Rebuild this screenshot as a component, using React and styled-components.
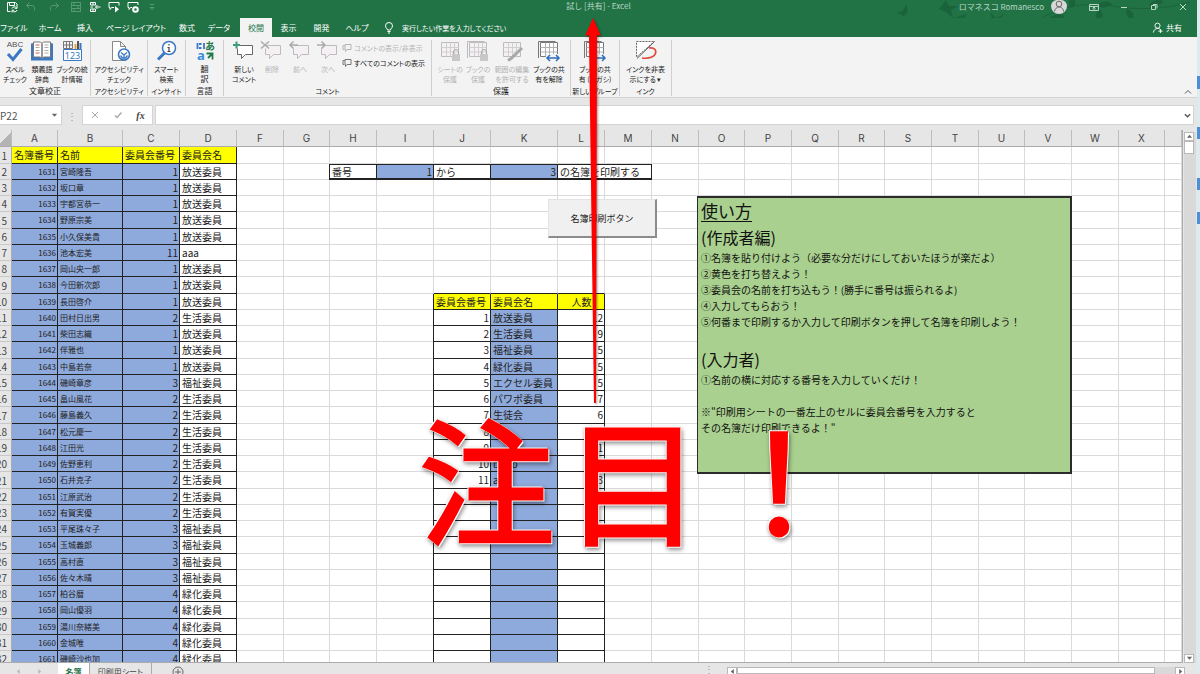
import React, { useState } from "react";
import styled, { createGlobalStyle, css } from "styled-components";

const GlobalStyle = createGlobalStyle`
  * {
    box-sizing: border-box;
  }
  html, body, #root {
    height: 100%;
    margin: 0;
  }
  body {
    overflow: hidden;
    background: #dcebf0;
    color: #222;
    font-family: "Noto Sans CJK JP", "Noto Sans", sans-serif;
    font-size: 8px;
  }
  button, input {
    margin: 0;
    padding: 0;
    border: 0;
    background: none;
    color: inherit;
    font: inherit;
  }
`;

const GREEN = "#217346";
const BLUE = "#8ea9db";
const YELLOW = "#ffff00";

/* ---------- data ---------- */

const committees = {
  1: "放送委員",
  2: "生活委員",
  3: "福祉委員",
  4: "緑化委員",
  11: "aaa"
};

const members = [
  ["宮崎隆吾", 1],
  ["坂口章", 1],
  ["宇都宮恭一", 1],
  ["野原宗美", 1],
  ["小久保美貴", 1],
  ["池本宏美", 11],
  ["岡山央一郎", 1],
  ["今田新次郎", 1],
  ["長田啓介", 1],
  ["田村日出男", 2],
  ["柴田志織", 1],
  ["伴雅也", 1],
  ["中島若奈", 1],
  ["磯崎章彦", 3],
  ["畠山風花", 2],
  ["藤島義久", 2],
  ["松元慶一", 2],
  ["江田光", 2],
  ["佐野恵利", 2],
  ["石井克子", 2],
  ["江原武治", 2],
  ["有賀実優", 2],
  ["平尾珠々子", 3],
  ["玉城義郎", 3],
  ["高村直", 3],
  ["佐々木晴", 3],
  ["柏谷暦", 4],
  ["岡山優羽", 4],
  ["湯川奈緒美", 4],
  ["金城唯", 4],
  ["磯崎沙也加", 4]
];

const summary = [
  [1, "放送委員", 12],
  [2, "生活委員", 9],
  [3, "福祉委員", 5],
  [4, "緑化委員", 5],
  [5, "エクセル委員", 5],
  [6, "パワポ委員", 7],
  [7, "生徒会", 6],
  [8, "", ""],
  [9, "", 1],
  [10, "bbbb", 1],
  [11, "aaa", 3]
];

const columns = [
  ["A", 46],
  ["B", 65],
  ["C", 57],
  ["D", 57],
  ["F", 47],
  ["G", 46],
  ["H", 47],
  ["I", 57],
  ["J", 57],
  ["K", 67],
  ["L", 47],
  ["M", 47],
  ["N", 47],
  ["O", 46],
  ["P", 47],
  ["Q", 47],
  ["R", 46],
  ["S", 47],
  ["T", 47],
  ["U", 46],
  ["V", 47],
  ["W", 47],
  ["X", 46]
];

const rows = Array.from({ length: 32 }, (_, i) => i + 1);

const cellFor = (col, row) => {
  if (row === 1) {
    const head = { A: "名簿番号", B: "名前", C: "委員会番号", D: "委員会名" };
    return head[col] ? { text: head[col], fill: YELLOW, ink: true } : {};
  }
  if ("ABCD".includes(col)) {
    const [name, no] = members[row - 2];
    if (col === "A") {
      return { text: 1629 + row, fill: BLUE, ink: true, right: true, small: true };
    }
    if (col === "B") return { text: name, fill: BLUE, ink: true, small: true };
    if (col === "C") return { text: no, fill: BLUE, ink: true, right: true };
    return { text: committees[no], ink: true };
  }
  if (row === 2) {
    const box = {
      H: { text: "番号" },
      I: { text: 1, fill: BLUE, right: true },
      J: { text: "から" },
      K: { text: 3, fill: BLUE, right: true },
      L: { text: "の名簿を印刷する", span: 2 }
    };
    return box[col]
      ? { ...box[col], ink: true, boxed: true, first: col === "H" }
      : {};
  }
  if (row === 9 && "JKL".includes(col)) return { inkBottom: true };
  if (row === 10 && "JKL".includes(col)) {
    const head = { J: "委員会番号", K: "委員会名", L: "人数" };
    return {
      text: head[col],
      fill: YELLOW,
      ink: true,
      center: col === "L",
      first: col === "J"
    };
  }
  if (row > 10 && "JKL".includes(col)) {
    const item = summary[row - 11] || ["", "", ""];
    return {
      text: item["JKL".indexOf(col)],
      fill: col === "K" ? BLUE : undefined,
      right: col !== "K",
      ink: true,
      first: col === "J"
    };
  }
  return {};
};

/* ---------- window frame ---------- */

const Screen = styled.div`
  display: flex;
  height: 100vh;
`;

const Window = styled.div`
  position: relative;
  flex: 1;
  min-width: 0;
  display: flex;
  flex-direction: column;
  overflow: hidden;
  background: #e6e6e6;
`;

const Desktop = styled.aside`
  width: 3px;
  padding-top: 76px;
  display: flex;
  flex-direction: column;
  background: #dcebf0;
`;

const DesktopMark = styled.i`
  height: ${p => p.$height}px;
  margin-bottom: ${p => p.$after}px;
  background: #4a90d9;
`;

const TitleBar = styled.header`
  position: relative;
  height: 18px;
  display: grid;
  grid-template-columns: 1fr auto 1fr;
  align-items: start;
  background: ${GREEN};
  color: #b9d5c5;
  line-height: 12px;
`;

const Leaves = styled.svg`
  position: absolute;
  top: 0;
  right: 0;
  width: 310px;
  height: 37px;
  fill: #1b633b;
  stroke: #1b633b;
  pointer-events: none;
`;

const QuickAccess = styled.div`
  display: flex;
  gap: 7px;
  padding: 1px 0 0 6px;
`;

const QuickButton = styled.button`
  width: 12px;
  height: 12px;
  margin-left: ${p => p.$space || 0}px;
  color: #fff;
  &:disabled {
    color: #579876;
  }
  svg {
    display: block;
  }
`;

const WindowTitle = styled.h1`
  margin: 0;
  font-size: 8px;
  font-weight: 400;
`;

const Account = styled.div`
  position: relative;
  display: flex;
  justify-content: flex-end;
  align-items: center;
  padding-right: 9px;
`;

const Avatar = styled.span`
  width: 16px;
  height: 14px;
  margin: 0 22px 0 7px;
  border-radius: 6px 6px 8px 8px;
  background: #d8d8d8;
  color: #666;
  svg {
    display: block;
    margin: 0 auto;
  }
`;

const WindowButton = styled.button`
  width: 10px;
  height: 12px;
  margin-left: ${p => p.$space || 0}px;
  svg {
    display: block;
  }
`;

const TabBar = styled.nav`
  position: relative;
  height: 19px;
  display: flex;
  align-items: stretch;
  background: ${GREEN};
  color: #fff;
`;

const Tab = styled.button`
  width: ${p => p.$width}px;
  white-space: nowrap;
  font-feature-settings: "palt";
  ${p =>
    p.$active &&
    css`
      background: #f3f3f3;
      color: ${GREEN};
    `}
`;

const TellMe = styled.label`
  flex: 1;
  display: flex;
  align-items: center;
  gap: 8px;
  padding-left: 8px;
  input {
    flex: 1;
    font-size: 7px;
    font-feature-settings: "palt";
  }
  input::placeholder {
    color: #fff;
    opacity: 1;
  }
`;

const ShareButton = styled.button`
  position: relative;
  display: flex;
  align-items: center;
  gap: 3px;
  margin-right: 15px;
`;

/* ---------- ribbon ---------- */

const Ribbon = styled.section`
  height: 61px;
  display: flex;
  padding: 3px 0 1px;
  border-bottom: 1px solid #d2d2d2;
  background: #f3f3f3;
`;

const Group = styled.div`
  width: ${p => p.$width}px;
  display: flex;
  flex-direction: column;
  justify-content: space-between;
  border-right: 1px solid #cfcfcf;
`;

const GroupTools = styled.div`
  display: flex;
  justify-content: center;
`;

const GroupName = styled.div`
  text-align: center;
  line-height: 10px;
  white-space: nowrap;
  font-size: ${p => (p.$tight ? 7 : 8)}px;
  font-feature-settings: "palt";
`;

const Tool = styled.button`
  width: ${p => p.$width || 28}px;
  display: flex;
  flex-direction: column;
  align-items: center;
  line-height: 10px;
  white-space: nowrap;
  font-size: ${p => (p.$tight ? 7 : 8)}px;
  font-feature-settings: "palt";
  svg {
    display: block;
    width: 24px;
    height: 22px;
    margin-bottom: 2px;
  }
  &:disabled {
    color: #b4b4b4;
  }
`;

const SideTools = styled.div`
  display: flex;
  flex-direction: column;
  align-items: flex-start;
`;

const SideTool = styled.button`
  display: flex;
  align-items: center;
  gap: 2px;
  height: 15px;
  font-size: 7px;
  white-space: nowrap;
  font-feature-settings: "palt";
  &:disabled {
    color: #b4b4b4;
  }
`;

const CollapseButton = styled.button`
  align-self: flex-end;
  margin: 0 5px 0 auto;
  width: 8px;
  height: 8px;
  svg {
    display: block;
  }
`;

/* ---------- formula bar ---------- */

const FormulaBar = styled.div`
  height: 32px;
  display: flex;
  align-items: stretch;
  padding: 7px 3px 5px 0;
  color: #555;
`;

const NameBox = styled.label`
  width: 62px;
  display: flex;
  align-items: center;
  padding-right: 3px;
  background: #fff;
  border: 1px solid #d4d4d4;
  border-left: 0;
  input {
    width: 51px;
    font-size: 10px;
  }
  svg {
    flex: none;
  }
`;

const Grip = styled.span`
  width: 20px;
  align-self: center;
  text-align: center;
  font-size: 10px;
  color: #999;
`;

const FormulaButtons = styled.div`
  width: 71px;
  display: flex;
  justify-content: space-around;
  align-items: center;
  background: #fff;
  border: 1px solid #d4d4d4;
`;

const FormulaButton = styled.button`
  width: 16px;
  color: #aaa;
  svg {
    display: block;
    margin: auto;
  }
`;

const FxLabel = styled.i`
  color: #444;
  font: italic bold 10px "Liberation Serif", serif;
`;

const FormulaInput = styled.label`
  flex: 1;
  margin-left: 2px;
  display: flex;
  align-items: center;
  padding: 0 2px;
  background: #fff;
  border: 1px solid #d4d4d4;
  input {
    flex: 1;
    font-size: 10px;
  }
`;

/* ---------- sheet ---------- */

const Workspace = styled.main`
  flex: 1;
  min-height: 0;
  display: flex;
`;

const Sheet = styled.div`
  position: relative;
  flex: 1;
  min-width: 0;
  overflow: hidden;
  border-right: 1px solid #ababab;
  border-bottom: 1px solid #ababab;
`;

const Grid = styled.table`
  width: 100%;
  table-layout: fixed;
  border-collapse: separate;
  border-spacing: 0;
  background: #fff;
  thead tr {
    height: 17px;
  }
  tbody tr {
    height: 16px;
  }
  tbody tr:nth-child(4n + 1) {
    height: 17px;
  }
`;

const ColumnHead = styled.th`
  padding: 0;
  border-right: 1px solid #bdbdbd;
  border-bottom: 1px solid #ababab;
  background: #e6e6e6;
  color: #444;
  font: 400 10px/16px Inter, sans-serif;
`;

const RowHead = styled.th`
  padding: 0;
  overflow: hidden;
  border-right: 1px solid #ababab;
  border-bottom: 1px solid #c8c8c8;
  background: #e6e6e6;
  color: #444;
  font-size: 10px;
  font-weight: 400;
  line-height: 15px;
  span {
    display: flex;
    justify-content: flex-end;
    padding-right: 4px;
  }
`;

const Corner = styled.th`
  padding: 0;
  border-right: 1px solid #bdbdbd;
  border-bottom: 1px solid #ababab;
  background: linear-gradient(135deg, #e6e6e6 50%, #b4b4b4 50%);
`;

const Cell = styled.td`
  padding: 0 1px 0 2px;
  overflow: hidden;
  white-space: nowrap;
  border-right: 1px solid #dadada;
  border-bottom: 1px solid #dadada;
  background: ${p => p.$fill || "#fff"};
  font-size: ${p => (p.$small ? 8 : 10)}px;
  line-height: 14px;
  text-align: ${p => (p.$center ? "center" : p.$right ? "right" : "left")};
  ${p =>
    p.$ink &&
    css`
      border-right-color: #222;
      border-bottom-color: #222;
    `}
  ${p =>
    p.$inkBottom &&
    css`
      border-bottom-color: #222;
    `}
  ${p =>
    p.$first &&
    css`
      box-shadow: -1px 0 #222;
    `}
  ${p =>
    p.$boxed &&
    css`
      border-top: 1px solid #222;
      border-bottom-width: 2px;
      line-height: 13px;
    `}
`;

const PrintButton = styled.button`
  position: absolute;
  left: 548px;
  top: 69px;
  width: 109px;
  height: 39px;
  background: #f0f0f0;
  border: 1px solid #e3e3e3;
  border-right: 2px solid #8c8c8c;
  border-bottom: 2px solid #8c8c8c;
  font-size: 9px;
`;

const Note = styled.article`
  position: absolute;
  left: 697px;
  top: 66px;
  width: 375px;
  height: 278px;
  padding: 0 3px;
  border: 2px solid #2b2b2b;
  border-left-width: 1px;
  background: #a9d08e;
  color: #111;
  font-size: 10px;
  line-height: 16px;
  white-space: nowrap;
  h2, h3 {
    margin: 0;
    font-weight: 400;
    line-height: 26px;
  }
  h2 {
    font-size: 17px;
    text-decoration: underline;
    text-decoration-thickness: 1px;
    text-underline-offset: 3px;
  }
  h3 {
    font-size: 16px;
  }
  p {
    margin: 0 0 16px;
  }
`;

const VerticalScroll = styled.div`
  width: 12px;
  margin: 2px 1px 0 1px;
  display: flex;
  flex-direction: column;
  background: #d9d9d9;
`;

const ScrollButton = styled.button`
  width: 10px;
  height: 9px;
  flex: none;
  background: #fff;
  border: 1px solid #b9b9b9;
  svg {
    display: block;
    margin: auto;
  }
`;

const VerticalThumb = styled.div`
  width: 10px;
  height: 13px;
  background: #fff;
  border: 1px solid #b9b9b9;
`;

const ScrollSpace = styled.div`
  flex: 1;
`;

/* ---------- bottom bar ---------- */

const BottomBar = styled.footer`
  height: 11px;
  display: flex;
  overflow: hidden;
  color: #444;
`;

const SheetNav = styled.div`
  width: 58px;
  display: flex;
  justify-content: center;
  gap: 14px;
  padding-top: 5px;
  svg {
    display: block;
  }
`;

const SheetTab = styled.button`
  height: 16px;
  width: ${p => p.$width}px;
  white-space: nowrap;
  font-feature-settings: "palt";
  border-right: 1px solid #ababab;
  ${p =>
    p.$active &&
    css`
      background: #fff;
      color: ${GREEN};
      font-weight: 700;
    `}
`;

const AddSheet = styled.button`
  width: 12px;
  height: 12px;
  margin: 3px 0 0 20px;
  svg {
    display: block;
  }
`;

const HorizontalScroll = styled.div`
  width: 458px;
  margin: 4px 12px 0 8px;
  display: flex;
  background: #d9d9d9;
`;

const HorizontalThumb = styled.div`
  width: 418px;
  background: #fff;
  border: 1px solid #b9b9b9;
`;

/* ---------- callout over the sheet ---------- */

const Arrow = styled.svg`
  position: absolute;
  left: 581px;
  top: 16px;
  width: 24px;
  height: 390px;
  pointer-events: none;
  filter: drop-shadow(1px 1px 1px rgba(0, 0, 0, 0.4));
`;

const Attention = styled.strong`
  position: absolute;
  left: 419px;
  top: 406px;
  display: flex;
  gap: 10px;
  color: #f00;
  font-size: 136px;
  font-weight: 400;
  line-height: 140px;
  -webkit-text-stroke: 3px #f00;
  filter: drop-shadow(1px 1px 0 #fff) drop-shadow(-1px -1px 0 #fff)
    drop-shadow(1px 2px 2px rgba(0, 0, 0, 0.45));
  pointer-events: none;
`;

/* ---------- icons ---------- */

const Person = ({ size = 12, plus }) => (
  <svg width={size} height={size} viewBox="0 0 12 12" fill="none" stroke="currentColor">
    <circle cx="6" cy="4" r="2.8" />
    <path d="M1.5 11.5C2 8.5 4 7 6 7s3 .8 4 2.4" />
    {plus ? <path d="M7 10h4.5M9.2 7.8v4.2" /> : <path d="M10 9.4l.6 2.1" />}
  </svg>
);

const Triangle = ({ dir = "down", color = "#666" }) => {
  const paths = {
    down: "M1 2h6L4 5.500z",
    up: "M1 5.500h6L4 2z",
    left: "M5.500 1v6L2 4z",
    right: "M2.500 1v6L6 4z"
  };
  return (
    <svg width="7" height="7" viewBox="0 0 8 8" fill={color}>
      <path d={paths[dir]} />
    </svg>
  );
};

const QuickIcon = ({ name }) => (
  <svg width="12" height="12" viewBox="0 0 12 12" fill="none" stroke="currentColor">
    {name === "save" && (
      <>
        <path d="M4.500 10.500h-3v-9h8l1.500 1.500v2M3.500 1.500v3h5v-3M6 7.500a2.500 2.500 0 0 1 4.500-.5M11 5v2.300H8.700M11 9a2.500 2.500 0 0 1-4.500.8M6 11.500V9.300h2.200" />
      </>
    )}
    {name === "undo" && <path d="M4.500 1.500L1.500 4.500l3 3M1.500 4.500h5.500a3 3 0 0 1 2 5" />}
    {name === "redo" && <path d="M7.500 1.500l3 3-3 3M10.500 4.500H5a3 3 0 0 0-2 5" />}
    {name === "sheet" && <path d="M1.500 1.500h9v9h-9zM1.500 4.500h9M1.500 7.500h9M4 1.500v3M4 7.500v3M8 4.500v3" />}
    {name === "insert" && (
      <path d="M1.500 1.500h5v2.500h-5zM1.500 8h5v2.500h-5zM4 1.500V4M4 8v2.500M1.500 6h2.500M11.500 6H6.500M8.500 4L6.500 6l2 2" />
    )}
    {name === "play" && (
      <>
        <path d="M6 6.500H3.500L2 8.500v-2H1v-5h10v3" />
        <path d="M7 5l4 3.200L7 11.500z" fill="currentColor" stroke="none" />
      </>
    )}
    {name === "record" && (
      <>
        <path d="M5 6.500H3.500L2 8.500v-2H1v-5h10v2.500" />
        <circle cx="8.500" cy="8.500" r="2.300" strokeWidth="2" />
      </>
    )}
    {name === "more" && <path d="M3.500 3.500h5M4 6.500l2 2 2-2z" />}
  </svg>
);

const Bubble = ({ mark, live }) => (
  <svg viewBox="0 0 24 22" fill="none" stroke={live ? "#666" : "#bcbcbc"}>
    <path d="M6.500 5.500h14v9h-7L9.500 18.500v-4h-4v-6" fill={live ? "#fff" : "#f4f0f3"} />
    {mark === "plus" && <path d="M1 5h7M4.500 1.500v7" stroke="#3f9b78" strokeWidth="2" />}
    {mark === "x" && <path d="M1 1.500l8 7M9 1.500l-8 7" stroke="#aaa" strokeWidth="1.500" />}
    {mark === "left" && <path d="M10 5H2M5.500 1.500L2 5l3.500 3.500" stroke="#aaa" strokeWidth="1.500" />}
    {mark === "right" && <path d="M1 5h8M5.500 1.500L9 5 5.500 8.500" stroke="#aaa" strokeWidth="1.500" />}
  </svg>
);

const SheetIcon = ({ mark, live }) => {
  const line = live ? "#777" : "#bcbcbc";
  return (
    <svg viewBox="0 0 24 22" fill="none" stroke={line}>
      {mark !== "lock" && mark !== "pen" && <path d="M1.500 18V1.500h17" />}
      <path
        d="M3.500 2.500h17v14h-17z"
        fill={live ? "#fff" : "#f4f0f3"}
      />
      <path
        d="M3.500 7.500h17M3.500 12h17M8.500 2.500v14M12.500 2.500v14M16.500 2.500v14"
        stroke={live ? "#b0b0b0" : "#d0d0d0"}
      />
      {(mark === "lock" || mark === "booklock") && (
        <>
          <path d="M15.500 14v-2a2.500 2.500 0 0 1 5 0v2" stroke="#aaa" />
          <path d="M14 14h8v7h-8z" fill="#c8c8c8" stroke="none" />
        </>
      )}
      {mark === "pen" && <path d="M22 8L11 18.500l-3 2" stroke="#a8a8a8" strokeWidth="3" />}
      {mark === "share" && (
        <>
          <path d="M9 14h14v8H9z" fill="#f3f3f3" stroke="none" />
          <path d="M10 18h12M13 15l-3 3 3 3M19 15l3 3-3 3" stroke="#2f6ebc" strokeWidth="1.500" />
        </>
      )}
    </svg>
  );
};

const SpellIcon = () => (
  <svg viewBox="0 0 24 22" fill="none">
    <text x="12" y="7" textAnchor="middle" fontSize="8" fill="#555" fontFamily="Liberation Sans">ABC</text>
    <path d="M5 14l5 5.500L18.500 9" stroke="#3a78c3" strokeWidth="3" />
  </svg>
);

const BookIcon = () => (
  <svg viewBox="0 0 24 22" fill="#fff" stroke="#777">
    <path d="M2 3.500v16h20v-16" fill="#3a78c3" stroke="#3a78c3" strokeWidth="2" />
    <path d="M3.500 2h7l1.500 1.500v15L10.500 17h-7zM20.500 2h-7L12 3.500v15l1.500-1.500h7z" />
    <path d="M5.500 5h4M5.500 13h4" stroke="#d9583b" />
    <path d="M5.500 7.500h4M5.500 10.500h4M14.500 5h4M14.500 7.500h4M14.500 10.500h4M14.500 13h4" stroke="#aaa" />
  </svg>
);

const StatsIcon = () => (
  <svg viewBox="0 0 24 22" fill="none" stroke="#777">
    <path d="M3.500 1.500h9v7h-9zM3.500 5h9M6.500 1.500v7M9.500 1.500v7" />
    <path d="M15.500 9V4" stroke="#e2a23b" strokeWidth="2" />
    <path d="M18 9V1" stroke="#555" strokeWidth="2" />
    <path d="M20.500 9V3" stroke="#3a78c3" strokeWidth="2" />
    <path d="M3.500 9.500h18v11h-18z" fill="#fff" stroke="#3a78c3" />
    <text x="12.500" y="18.500" textAnchor="middle" fontSize="9" stroke="none" fill="#3a78c3" fontFamily="Noto Sans">123</text>
  </svg>
);

const AccessIcon = () => (
  <svg viewBox="0 0 24 22" fill="#fff" stroke="#888">
    <path d="M5.500 20.500v-19h8l5 5v14zM13.500 1.500v5h5" />
    <circle cx="17" cy="14.500" r="5.500" stroke="#3a78c3" strokeWidth="1.600" />
    <path d="M14 12.500l3 2.500 3-2.500M17 15v3M13.500 15.500l2 2.500h3l2-2.500" fill="none" stroke="#3a78c3" strokeWidth="1.300" />
  </svg>
);

const LookupIcon = () => (
  <svg viewBox="0 0 24 22" fill="none">
    <path d="M10 12.500L3 19.500" stroke="#3a78c3" strokeWidth="3" />
    <circle cx="14" cy="8" r="6.500" fill="#fff" stroke="#3a78c3" strokeWidth="1.500" />
    <path d="M14 7v4.500M14 4v1.500M12.500 11.500h3M12.500 7.500H14" stroke="#444" strokeWidth="1.200" />
  </svg>
);

const TranslateIcon = () => (
  <svg viewBox="0 0 24 22" fill="none" strokeWidth="1.800">
    <text x="12" y="10" fontSize="10" fontWeight="700" fill="#1f7a4a">あ</text>
    <text x="4" y="20" fontSize="13" fontWeight="700" fill="#3a8fdb" fontFamily="Noto Sans">a</text>
    <path d="M4.500 3v6M8.500 4H6M8.500 8H6M11 3v6" stroke="#3a78c3" />
    <path d="M13.500 13.500h6v6M19 14l-4 4" stroke="#1f7a4a" />
  </svg>
);

const InkIcon = () => (
  <svg viewBox="0 0 24 22" fill="none">
    <path d="M2.500 1.500h18L2.500 17z" fill="#fff" stroke="#666" strokeDasharray="2 1" />
    <path d="M20.500 1.500L3 18.500" stroke="#555" />
    <path d="M15 8c6-1 8 3 6 6.500-2 3-8 4-13 3.500" stroke="#e0483e" strokeWidth="1.600" />
  </svg>
);

const SmallBubble = ({ color = "currentColor" }) => (
  <svg width="10" height="10" viewBox="0 0 10 10" fill="none" stroke={color}>
    <path d="M2.500 6.500H1v-4h2M3 1.500h6v5H5L3.500 8.500v-2H3z" />
  </svg>
);

/* ---------- parts ---------- */

const tabs = [
  ["ファイル", 26],
  ["ホーム", 48],
  ["挿入", 22],
  ["ページ レイアウト", 80],
  ["数式", 22],
  ["データ", 42],
  ["校閲", 32],
  ["表示", 33],
  ["開発", 33],
  ["ヘルプ", 38]
];

const Header = () => {
  const [active, setActive] = useState("校閲");
  return (
    <>
      <TitleBar>
        <Leaves viewBox="0 0 310 37">
          <path d="M10 13l6-2 3-7 2 8-4 4zM52 9l7-9 3 6 9 0-7 4 2 8-6-5zM66 18l14-4-6 10-8-2zM103 12l6 6 8-4-6 7-2 6-4-8z" stroke="none" />
          <path d="M155 18c20-12 45-16 70-12s50 4 78-4" fill="none" />
          <path d="M160 20c6-7 14-6 18-4-5 5-12 8-18 4zM184 8c-4-4-2-9 2-10 4 4 3 8-2 10zM186 22c5-5 12-5 16-1-5 4-11 5-16 1zM210 5c5-5 12-4 15-1-5 4-10 5-15 1zM212 9c5 3 4 10 0 15-4-6-4-11 0-15zM240 9c6 2 8 7 6 12-6-3-8-7-6-12zM262 6c2-6 9-7 14-5-3 5-8 7-14 5z" stroke="none" />
        </Leaves>
        <QuickAccess>
          <QuickButton aria-label="上書き保存"><QuickIcon name="save" /></QuickButton>
          <QuickButton aria-label="元に戻す" disabled><QuickIcon name="undo" /></QuickButton>
          <QuickButton aria-label="やり直し" disabled $space={4}><QuickIcon name="redo" /></QuickButton>
          <QuickButton aria-label="シート" disabled $space={3}><QuickIcon name="sheet" /></QuickButton>
          <QuickButton aria-label="挿入"><QuickIcon name="insert" /></QuickButton>
          <QuickButton aria-label="マクロの実行"><QuickIcon name="play" /></QuickButton>
          <QuickButton aria-label="マクロの記録"><QuickIcon name="record" /></QuickButton>
          <QuickButton aria-label="カスタマイズ" disabled><QuickIcon name="more" /></QuickButton>
        </QuickAccess>
        <WindowTitle>試し [共有] - Excel</WindowTitle>
        <Account>
          ロマネスコ Romanesco
          <Avatar><Person size={12} /></Avatar>
          <WindowButton aria-label="リボンの表示オプション">
            <svg width="10" height="12" viewBox="0 0 10 12" fill="none" stroke="currentColor"><path d="M.5 3.500h9v6h-9zM.5 5.500h9M5 9V6M3.500 7.500L5 6l1.500 1.500" /></svg>
          </WindowButton>
          <WindowButton aria-label="最小化" $space={20}>
            <svg width="10" height="12" viewBox="0 0 10 12" stroke="currentColor"><path d="M2 6.500h6" /></svg>
          </WindowButton>
          <WindowButton aria-label="元のサイズに戻す" $space={20}>
            <svg width="10" height="12" viewBox="0 0 10 12" fill="none" stroke="currentColor"><path d="M2.500 4.500h4v4h-4zM4 3.500h4v4" /></svg>
          </WindowButton>
          <WindowButton aria-label="閉じる" $space={19}>
            <svg width="10" height="12" viewBox="0 0 10 12" stroke="currentColor"><path d="M2 3l6 6M8 3L2 9" /></svg>
          </WindowButton>
        </Account>
      </TitleBar>
      <TabBar>
        {tabs.map(([name, width]) => (
          <Tab
            key={name}
            $width={width}
            $active={active === name}
            onClick={() => setActive(name)}>
            {name}
          </Tab>
        ))}
        <TellMe>
          <svg width="10" height="12" viewBox="0 0 10 12" fill="none" stroke="#fff">
            <path d="M3.500 8C3.500 6.500 1.500 6 1.500 3.800a3.500 3.300 0 0 1 7 0C8.500 6 6.500 6.500 6.500 8zM3.500 9.500h3M4 11h2" />
          </svg>
          <input
            aria-label="操作アシスト"
            placeholder="実行したい作業を入力してください"
          />
        </TellMe>
        <ShareButton>
          <Person size={11} plus />
          共有
        </ShareButton>
      </TabBar>
    </>
  );
};

const ReviewRibbon = () => (
  <Ribbon>
    <Group $width={91}>
      <GroupTools>
        <Tool $width={26} $tight><SpellIcon />スペル<br />チェック</Tool>
        <Tool $tight><BookIcon />類義語<br />辞典</Tool>
        <Tool $width={32} $tight><StatsIcon />ブックの統<br />計情報</Tool>
      </GroupTools>
      <GroupName>文章校正</GroupName>
    </Group>
    <Group $width={57}>
      <GroupTools>
        <Tool $width={54} $tight><AccessIcon />アクセシビリティ<br />チェック</Tool>
      </GroupTools>
      <GroupName $tight>アクセシビリティ</GroupName>
    </Group>
    <Group $width={38}>
      <GroupTools>
        <Tool $tight><LookupIcon />スマート<br />検索</Tool>
      </GroupTools>
      <GroupName $tight>インサイト</GroupName>
    </Group>
    <Group $width={38}>
      <GroupTools>
        <Tool><TranslateIcon />翻<br />訳</Tool>
      </GroupTools>
      <GroupName>言語</GroupName>
    </Group>
    <Group $width={208}>
      <GroupTools>
        <Tool $tight><Bubble mark="plus" live />新しい<br />コメント</Tool>
        <Tool disabled $tight><Bubble mark="x" />削除</Tool>
        <Tool disabled $tight><Bubble mark="left" />前へ</Tool>
        <Tool disabled $tight><Bubble mark="right" />次へ</Tool>
        <SideTools>
          <SideTool disabled><SmallBubble />コメントの表示/非表示</SideTool>
          <SideTool><SmallBubble color="#777" />すべてのコメントの表示</SideTool>
        </SideTools>
      </GroupTools>
      <GroupName $tight>コメント</GroupName>
    </Group>
    <Group $width={139}>
      <GroupTools>
        <Tool disabled $tight><SheetIcon mark="lock" />シートの<br />保護</Tool>
        <Tool disabled $tight><SheetIcon mark="booklock" />ブックの<br />保護</Tool>
        <Tool disabled $tight $width={40}><SheetIcon mark="pen" />範囲の編集<br />を許可する</Tool>
        <Tool $width={34} $tight><SheetIcon mark="share" live />ブックの共<br />有を解除</Tool>
      </GroupTools>
      <GroupName>保護</GroupName>
    </Group>
    <Group $width={49}>
      <GroupTools>
        <Tool $width={40} $tight><SheetIcon mark="share" live />ブックの共<br />有 (レガシ)</Tool>
      </GroupTools>
      <GroupName $tight>新しいグループ</GroupName>
    </Group>
    <Group $width={52}>
      <GroupTools>
        <Tool $width={40} $tight><InkIcon />インクを非表<br />示にする ▾</Tool>
      </GroupTools>
      <GroupName $tight>インク</GroupName>
    </Group>
    <CollapseButton aria-label="リボンを折りたたむ">
      <svg width="8" height="8" viewBox="0 0 8 8" fill="none" stroke="#555"><path d="M1 5.500l3-3 3 3" /></svg>
    </CollapseButton>
  </Ribbon>
);

const CellFormula = () => (
  <FormulaBar>
    <NameBox>
      <input aria-label="名前ボックス" defaultValue="P22" />
      <Triangle />
    </NameBox>
    <Grip>⋮</Grip>
    <FormulaButtons>
      <FormulaButton aria-label="キャンセル">
        <svg width="8" height="8" viewBox="0 0 8 8" stroke="currentColor"><path d="M1 1l6 6M7 1L1 7" /></svg>
      </FormulaButton>
      <FormulaButton aria-label="入力">
        <svg width="8" height="8" viewBox="0 0 8 8" fill="none" stroke="currentColor" strokeWidth="1.500"><path d="M1 4.500L3 6.500 7.500 1.500" /></svg>
      </FormulaButton>
      <FormulaButton aria-label="関数の挿入"><FxLabel>fx</FxLabel></FormulaButton>
    </FormulaButtons>
    <FormulaInput>
      <input aria-label="数式バー" />
      <svg width="7" height="7" viewBox="0 0 8 8" fill="none" stroke="#555" strokeWidth="1.500"><path d="M1 2.500l3 3 3-3" /></svg>
    </FormulaInput>
  </FormulaBar>
);

const RosterGrid = () => (
  <Grid>
    <colgroup>
      <col width="12" />
      {columns.map(([name, width]) => (
        <col key={name} width={width} />
      ))}
      <col />
    </colgroup>
    <thead>
      <tr>
        <Corner />
        {columns.map(([name]) => (
          <ColumnHead key={name} scope="col">{name}</ColumnHead>
        ))}
        <ColumnHead />
      </tr>
    </thead>
    <tbody>
      {rows.map(row => (
        <tr key={row}>
          <RowHead scope="row"><span>{row}</span></RowHead>
          {columns
            .filter(([name]) => !(row === 2 && name === "M"))
            .map(([name]) => {
              const cell = cellFor(name, row);
              return (
                <Cell
                  key={name}
                  colSpan={cell.span}
                  $fill={cell.fill}
                  $ink={cell.ink}
                  $inkBottom={cell.inkBottom}
                  $first={cell.first}
                  $boxed={cell.boxed}
                  $small={cell.small}
                  $right={cell.right}
                  $center={cell.center}>
                  {cell.text}
                </Cell>
              );
            })}
          <Cell />
        </tr>
      ))}
    </tbody>
  </Grid>
);

const HowTo = () => (
  <Note>
    <h2>使い方</h2>
    <h3>(作成者編)</h3>
    <p>
      ①名簿を貼り付けよう（必要な分だけにしておいたほうが楽だよ）<br />
      ②黄色を打ち替えよう！<br />
      ③委員会の名前を打ち込もう！(勝手に番号は振られるよ)<br />
      ④入力してもらおう！<br />
      ⑤何番まで印刷するか入力して印刷ボタンを押して名簿を印刷しよう！
    </p>
    <h3>(入力者)</h3>
    <p>①名前の横に対応する番号を入力していくだけ！</p>
    <p>
      ※"印刷用シートの一番左上のセルに委員会番号を入力すると<br />
      その名簿だけ印刷できるよ！"
    </p>
  </Note>
);

const App = () => {
  const [sheet, setSheet] = useState("名簿");
  return (
    <Screen lang="ja">
      <GlobalStyle />
      <Window>
        <Header />
        <ReviewRibbon />
        <CellFormula />
        <Workspace>
          <Sheet>
            <RosterGrid />
            <PrintButton>名簿印刷ボタン</PrintButton>
            <HowTo />
          </Sheet>
          <VerticalScroll>
            <ScrollButton aria-label="上へ"><Triangle dir="up" /></ScrollButton>
            <VerticalThumb />
            <ScrollSpace />
            <ScrollButton aria-label="下へ"><Triangle /></ScrollButton>
          </VerticalScroll>
        </Workspace>
        <BottomBar>
          <SheetNav>
            <Triangle dir="left" color="#bbb" />
            <Triangle dir="right" color="#bbb" />
          </SheetNav>
          <SheetTab $width={32} $active={sheet === "名簿"} onClick={() => setSheet("名簿")}>
            名簿
          </SheetTab>
          <SheetTab $width={62} $active={sheet === "印刷用シート"} onClick={() => setSheet("印刷用シート")}>
            印刷用シート
          </SheetTab>
          <AddSheet aria-label="新しいシート">
            <svg width="12" height="12" viewBox="0 0 12 12" fill="none" stroke="#666"><circle cx="6" cy="6" r="5" /><path d="M6 3v6M3 6h6" /></svg>
          </AddSheet>
          <ScrollSpace />
          <Grip>⋮</Grip>
          <HorizontalScroll>
            <ScrollButton aria-label="左へ"><Triangle dir="left" /></ScrollButton>
            <HorizontalThumb />
            <ScrollSpace />
            <ScrollButton aria-label="右へ"><Triangle dir="right" /></ScrollButton>
          </HorizontalScroll>
        </BottomBar>
        <Arrow viewBox="0 0 24 390">
          <path d="M12 2L20 20l-4-1L15 387h-2L8 19l-4 1z" fill="#f00" />
        </Arrow>
        <Attention>
          <span>注</span>
          <span>目</span>
          <span>！</span>
        </Attention>
      </Window>
      <Desktop>
        <DesktopMark $height={13} $after={38} />
        <DesktopMark $height={12} $after={39} />
        <DesktopMark $height={12} $after={22} />
        <DesktopMark $height={12} $after={0} />
      </Desktop>
    </Screen>
  );
};

export default App;
